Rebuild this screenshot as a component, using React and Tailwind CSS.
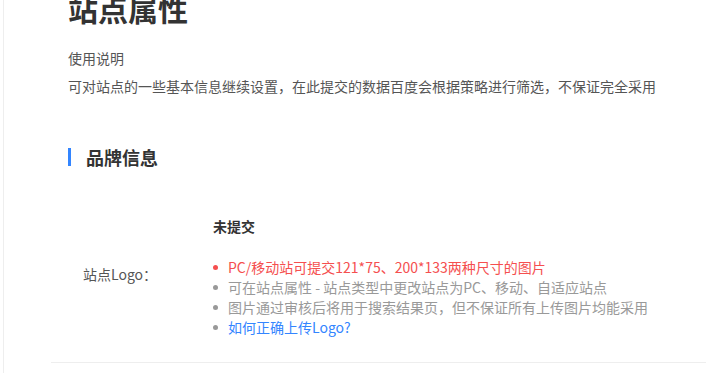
import React from "react";

const tips = [
  { text: "PC/移动站可提交121*75、200*133两种尺寸的图片", color: "text-[#f54f4f]", dot: "bg-[#f54f4f]" },
  { text: "可在站点属性 - 站点类型中更改站点为PC、移动、自适应站点", color: "text-[#999]", dot: "bg-[#999]" },
  { text: "图片通过审核后将用于搜索结果页，但不保证所有上传图片均能采用", color: "text-[#999]", dot: "bg-[#999]" },
  { text: "如何正确上传Logo?", color: "text-[#3385ff]", dot: "bg-[#999]" },
];

export default function App() {
  return (
    <div
      className="w-[706px] h-[385px] overflow-hidden bg-white"
      style={{ fontFamily: '"Noto Sans CJK SC", "Microsoft YaHei", sans-serif' }}
    >
      <div className="ml-[3px] h-full border-l border-[#eee] pl-[64px]">
        {/* TITLE */}
        <h1 className="-mt-[12px] text-[30px] leading-[40px] font-bold text-[#333]">
          站点属性
        </h1>

        {/* DESCRIPTION */}
        <div className="mt-[16px] text-[14px] leading-[28px] text-[#555]">
          <p>使用说明</p>
          <p>可对站点的一些基本信息继续设置，在此提交的数据百度会根据策略进行筛选，不保证完全采用</p>
        </div>

        {/* BRAND INFO */}
        <div className="mt-[48px] flex items-center h-[18px]">
          <span className="w-[3px] h-[18px] bg-[#3385ff]" />
          <h2 className="ml-[15px] text-[18px] font-bold text-[#333] leading-[18px]">
            品牌信息
          </h2>
        </div>

        <div className="mt-[50px] flex">
          <div className="w-[145px] pt-[48px] pl-[15px] text-[14px] leading-[20px] text-[#555]">
            站点Logo：
          </div>
          <div>
            <p className="text-[14px] font-bold text-[#333] leading-[20px]">未提交</p>
            <ul className="mt-[21px] text-[14px] leading-[20px]">
              {tips.map((t) => (
                <li key={t.text} className="flex items-center">
                  <span className={`w-[5px] h-[5px] rounded-full ${t.dot}`} />
                  <span className={`ml-[10px] ${t.color}`}>{t.text}</span>
                </li>
              ))}
            </ul>
          </div>
        </div>

        <div className="mt-[25px] -ml-[17px] border-t border-[#eee]" />
      </div>
    </div>
  );
}
